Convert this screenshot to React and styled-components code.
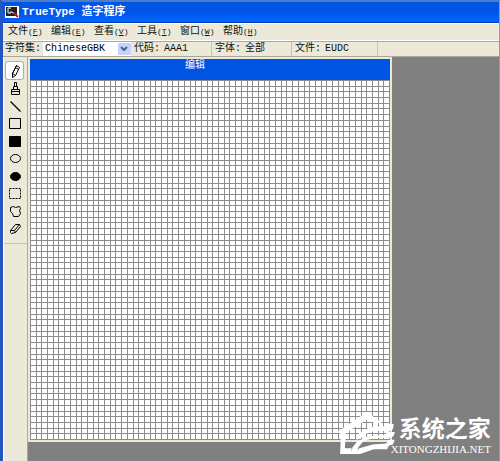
import React from 'react';
import styled, { createGlobalStyle } from 'styled-components';

const menus = [
  { title: '文件', mnemonic: 'F' },
  { title: '编辑', mnemonic: 'E' },
  { title: '查看', mnemonic: 'V' },
  { title: '工具', mnemonic: 'T' },
  { title: '窗口', mnemonic: 'W' },
  { title: '帮助', mnemonic: 'H' },
];

const info = [
  { label: '代码:', value: 'AAA1', width: 81 },
  { label: '字体:', value: '全部', width: 80 },
  { label: '文件:', value: 'EUDC', width: 86 },
];

const tools = [
  {
    title: '铅笔',
    icon: <path d="M8 1l3 2-4 8-3 2V9zM7 3l3 2M4 9l3 2M4 11v2M8 1L4 9" />,
  },
  {
    title: '刷子',
    icon: <path d="M6 5V1h2v4M5 5h4v3H5zM3 8h8v5H3zM3 10h8" />,
  },
  { title: '直线', icon: <path d="M2 2l10 10" strokeWidth="1.3" /> },
  { title: '空心矩形', icon: <path d="M1 2h11v10H1z" /> },
  { title: '实心矩形', icon: <path d="M1 2h11v10H1z" fill="#000" /> },
  { title: '空心椭圆', icon: <ellipse cx="7" cy="7" rx="5" ry="4" /> },
  { title: '实心椭圆', icon: <ellipse cx="7" cy="7" rx="5" ry="4" fill="#000" /> },
  {
    title: '矩形选项',
    icon: <path d="M1 2h11v10H1z" strokeDasharray="2 1" />,
  },
  {
    title: '任意形状选项',
    icon: <path d="M2 3l3-1 2 1 4-1 1 2-1 2 1 3-2 3H5l-1-3-2-2z" />,
  },
  {
    title: '橡皮擦',
    icon: <path d="M2 9l5-6h4l1 2-5 6-4 1-1-1zM2 9h4l1 2M6 9l5-6" />,
  },
];

const CELLS = 63;
const lines = Array.from({ length: CELLS + 1 }, (_, i) => Math.round((i * 359) / CELLS));

function GlyphGrid() {
  return (
    <Grid viewBox="0 0 360 360" role="img" aria-label="编辑网格">
      <path
        d={lines.map((p) => `M${p} 0h1v360h-1zM0 ${p}h360v1H0z`).join('')}
        fill="#8c8c8c"
        shapeRendering="crispEdges"
      />
    </Grid>
  );
}

export default function App() {
  return (
    <Window>
      <GlobalStyle />
      <TitleBar>
        <svg width="14" height="12" viewBox="0 0 14 12" aria-hidden="true">
          <path d="M0 0h14v12H0z" fill="#fff" />
          <path d="M1 1h11v9H1z" fill="#222" />
          <path d="M6 2H3v5h3V5M7 6l4 3" stroke="#fff" fill="none" />
          <path d="M9 7l4 4" stroke="#a22" strokeWidth="2" />
        </svg>
        <Title>TrueType 造字程序</Title>
      </TitleBar>
      <MenuBar>
        {menus.map((item) => (
          <MenuButton key={item.title} type="button">
            {item.title}
            <Mnemonic>
              (<u>{item.mnemonic}</u>)
            </Mnemonic>
          </MenuButton>
        ))}
      </MenuBar>
      <InfoBar>
        <SelectLabel htmlFor="charset">字符集:</SelectLabel>
        <SelectBox>
          <Select id="charset" defaultValue="ChineseGBK">
            <option>ChineseGBK</option>
          </Select>
          <Arrow viewBox="0 0 13 12" aria-hidden="true">
            <rect width="13" height="12" rx="1" fill="#c3d3fd" />
            <path d="M3 4l3 3 3-3" fill="none" stroke="#4d6185" strokeWidth="2" />
          </Arrow>
        </SelectBox>
        {info.map((item) => (
          <Field key={item.label} $width={item.width}>
            <span>{item.label}</span>
            <span>{item.value}</span>
          </Field>
        ))}
      </InfoBar>
      <Body>
        <Toolbox>
          <ToolList>
            {tools.map((tool, index) => (
              <Tool key={tool.title} type="button" aria-label={tool.title} $active={index === 0}>
                <svg width="14" height="14" viewBox="0 0 14 14" fill="none" stroke="#000">
                  <g transform="translate(.5 .5)">{tool.icon}</g>
                </svg>
              </Tool>
            ))}
          </ToolList>
        </Toolbox>
        <Workspace>
          <EditWindow>
            <EditTitle>编辑</EditTitle>
            <GlyphGrid />
          </EditWindow>
        </Workspace>
      </Body>
      <Watermark>
        <Logo viewBox="0 0 60 50" aria-hidden="true">
          <path d="M0 26L12 18 31 5l16 12h-8l-8-4-17 11-5 3-1 16h7v6H3l1-21z" />
          <path d="M59 18l-1 5-3 2H39l-10 3-5 5-4 1 3-7 11-6 15-1 2-3z" />
          <path d="M60 26l-1 4-3 2H42l-14 3-6 7-1 7h-7l2-7 4-5 10-6 20-2 2-3z" />
          <path d="M60 34l-2 5-4 1-2 4H38l-14 5h-5l4-6 14-4 14-1 3-4z" />
        </Logo>
        <WatermarkText>
          <SiteName>系统之家</SiteName>
          <SiteUrl>XITONGZHIJIA.NET</SiteUrl>
        </WatermarkText>
      </Watermark>
    </Window>
  );
}

const GlobalStyle = createGlobalStyle`
  * {
    box-sizing: border-box;
  }
  body {
    margin: 0;
  }
  button {
    padding: 0;
    border: 0;
    font: inherit;
    color: inherit;
    background: none;
  }
`;
const Window = styled.div`
  position: relative;
  display: flex;
  flex-direction: column;
  min-height: 100vh;
  border-top: 2px solid #4c7fc4;
  border-left: 3px solid #2455c0;
  border-right: 1px solid #8c9cb8;
  font: 10px/14px 'Liberation Mono', 'Noto Sans CJK SC', monospace;
  color: #111;
  background: #ece9d8;
`;
const TitleBar = styled.header`
  display: flex;
  align-items: center;
  gap: 3px;
  height: 21px;
  padding-left: 2px;
  border-bottom: 1px solid #003dba;
  background: linear-gradient(#0054e3, #0055e5 50%, #0066ff);
`;
const Title = styled.h1`
  margin: 0;
  font-size: 11px;
  color: #fff;
`;
const MenuBar = styled.nav`
  display: flex;
  gap: 8px;
  height: 18px;
  padding-left: 5px;
  border-top: 1px solid #fff;
  border-bottom: 1px solid #fff;
`;
const MenuButton = styled.button`
  display: flex;
  align-items: center;
  width: 35px;
  white-space: nowrap;
`;
const Mnemonic = styled.span`
  font-size: 8px;
`;
const InfoBar = styled.div`
  display: flex;
  align-items: center;
  height: 16px;
  border-top: 1px solid #aca899;
  border-bottom: 1px solid #aca899;
`;
const SelectLabel = styled.label`
  width: 40px;
  padding-left: 2px;
`;
const SelectBox = styled.div`
  display: flex;
  align-items: center;
  width: 88px;
  height: 14px;
  background: #fff;
`;
const Select = styled.select`
  flex: 1;
  min-width: 0;
  padding: 0 2px;
  border: 0;
  appearance: none;
  font: inherit;
  background: none;
`;
const Arrow = styled.svg`
  width: 13px;
  height: 12px;
`;
const Field = styled.div`
  display: flex;
  gap: 4px;
  width: ${({ $width }) => $width}px;
  padding-left: 3px;
  border-right: 1px solid #c8c4b4;
  white-space: nowrap;
`;
const Body = styled.main`
  display: flex;
  flex: 1;
`;
const Toolbox = styled.aside`
  width: 25px;
  border-left: 1px solid #fff;
  border-right: 1px solid #aca899;
`;
const ToolList = styled.div`
  display: flex;
  flex-direction: column;
  justify-content: space-between;
  align-items: flex-start;
  height: 187px;
  padding: 5px 2px 6px;
  border-bottom: 1px solid #c8c4b4;
`;
const Tool = styled.button`
  display: flex;
  justify-content: center;
  align-items: center;
  width: 17px;
  height: 17px;
  border-radius: 2px;
  background: ${({ $active }) => ($active ? '#fff' : 'none')};
  box-shadow: ${({ $active }) => ($active ? '0 0 0 1px #98b5e2' : 'none')};
`;
const Workspace = styled.section`
  flex: 1;
  background: #808080;
`;
const EditWindow = styled.div`
  width: 364px;
  padding: 2px;
  background: #ece9d8;
`;
const EditTitle = styled.h2`
  height: 21px;
  margin: 0;
  padding-right: 30px;
  font-size: 10px;
  line-height: 14px;
  font-weight: 400;
  text-align: center;
  color: #fff;
  background: #0054e3;
`;
const Grid = styled.svg`
  display: block;
  width: 360px;
  height: 360px;
  background: #fff;
`;
const Watermark = styled.div`
  position: absolute;
  right: 8px;
  bottom: 6px;
  display: flex;
  align-items: flex-end;
  color: #fff;
`;
const Logo = styled.svg`
  width: 58px;
  height: 48px;
  margin-right: -4px;
  fill: #fff;
`;
const WatermarkText = styled.div`
  display: flex;
  flex-direction: column;
`;
const SiteName = styled.strong`
  padding-left: 8px;
  font: 700 23px/32px 'Noto Sans CJK SC', sans-serif;
`;
const SiteUrl = styled.span`
  font: 11px/12px 'Liberation Serif', serif;
`;
